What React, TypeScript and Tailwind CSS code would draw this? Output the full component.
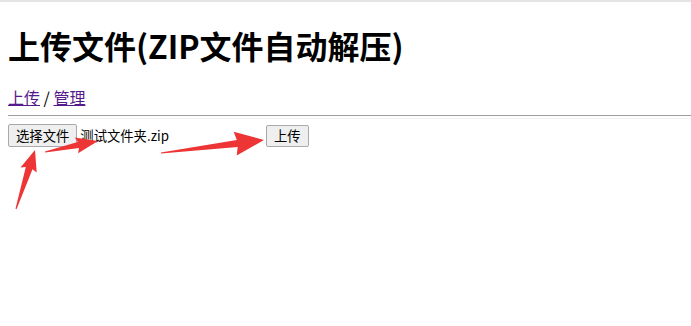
import React from "react";

type P = [number, number];

function arrowPoints(tail: P, tip: P, headLen: number, headW: number, shaftW: number, tailW: number): string {
  const dx = tip[0] - tail[0];
  const dy = tip[1] - tail[1];
  const len = Math.hypot(dx, dy);
  const ux = dx / len;
  const uy = dy / len;
  const nx = -uy;
  const ny = ux;
  const bx = tip[0] - ux * headLen;
  const by = tip[1] - uy * headLen;
  const pts: P[] = [
    [tail[0] + nx * tailW / 2, tail[1] + ny * tailW / 2],
    [bx + nx * shaftW / 2 - ux * 2, by + ny * shaftW / 2 - uy * 2],
    [bx + nx * headW / 2 - ux * 4, by + ny * headW / 2 - uy * 4],
    tip,
    [bx - nx * headW / 2 - ux * 4, by - ny * headW / 2 - uy * 4],
    [bx - nx * shaftW / 2 - ux * 2, by - ny * shaftW / 2 - uy * 2],
    [tail[0] - nx * tailW / 2, tail[1] - ny * tailW / 2],
  ];
  return pts.map((p) => `${p[0].toFixed(1)},${p[1].toFixed(1)}`).join(" ");
}

export default function App() {
  const font = { fontFamily: '"Noto Sans CJK SC", "Liberation Sans", sans-serif' };
  return (
    <div className="relative w-[691px] h-[326px] bg-white overflow-hidden text-black" style={font}>
      <div className="h-[2px] bg-[#e4e4e4]" />
      <h1 className="mt-[23px] ml-2 text-[32px] leading-[40px] font-bold">
        上传文件(ZIP文件自动解压)
      </h1>
      <div className="mt-[22px] ml-2 text-[16px] leading-[20px]">
        <a href="#" className="text-[#551a8b] underline">上传</a>
        <span> / </span>
        <a href="#" className="text-[#551a8b] underline">管理</a>
      </div>
      <div className="mt-[8px] ml-2 border-t border-[#9c9c9c] h-[4px] border-b border-b-[#f2f2f2]" />
      <div className="mt-[5px] ml-2 flex items-center text-[13.33px]">
        <div className="w-[254px] flex items-center">
          <button className="h-[23px] px-[7px] border border-[#a9a9a9] bg-[#efefef] rounded-[2px] leading-[21px] text-[13.33px]">
            选择文件
          </button>
          <span className="ml-[3px] leading-[21px]">测试文件夹.zip</span>
        </div>
        <button className="ml-[4px] mt-[1px] h-[22px] px-[7px] border border-[#a9a9a9] bg-[#efefef] rounded-[2px] leading-[20px] text-[13.33px]">
          上传
        </button>
      </div>
      <svg className="absolute left-0 top-0 pointer-events-none" width="691" height="326">
        <polygon points={arrowPoints([16, 209], [35, 150], 17, 17, 7, 1)} fill="#ee3535" />
        <polygon points={arrowPoints([45, 152], [98, 141], 18, 16, 6, 1)} fill="#ee3535" />
        <polygon points={arrowPoints([161, 153], [264, 140], 25, 24, 7, 1)} fill="#ee3535" />
      </svg>
    </div>
  );
}
